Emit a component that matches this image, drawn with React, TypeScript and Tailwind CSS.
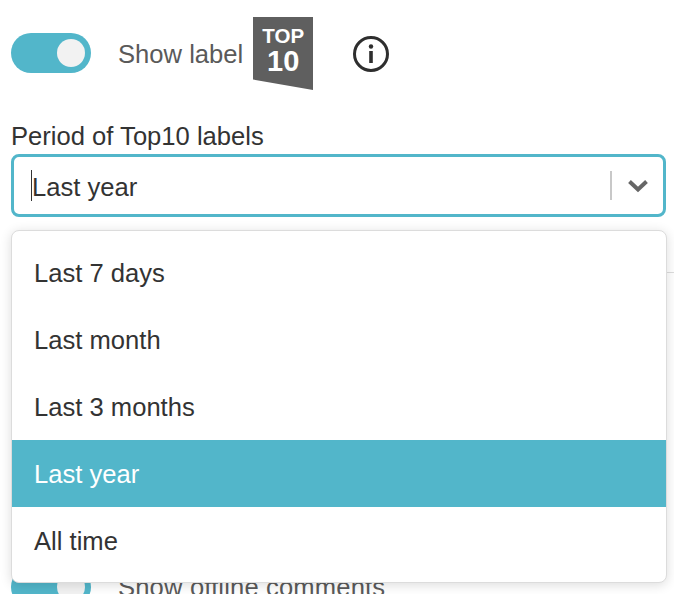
import React from 'react';

const options = ['Last 7 days', 'Last month', 'Last 3 months', 'Last year', 'All time'];

const Toggle = () => (
  <div className="flex h-10 w-20 shrink-0 items-center justify-end rounded-full bg-[#52b6ca] pr-1.5">
    <div className="h-[28px] w-[28px] rounded-full bg-[#f2f2f2]" />
  </div>
);

const Top10Badge = () => (
  <div className="relative h-[73px] w-[60px] shrink-0">
    <svg width="60" height="73" viewBox="0 0 60 73" className="absolute inset-0">
      <path d="M0 0H60V73L0 62.5Z" fill="#5f5f5f" />
    </svg>
    <div className="relative flex flex-col items-center pt-[8px] font-bold text-white">
      <span className="text-[20.5px] leading-[22px]">TOP</span>
      <span className="text-[29px] leading-[29px]">10</span>
    </div>
  </div>
);

const InfoIcon = () => (
  <svg width="38" height="38" viewBox="0 0 38 38" fill="none" className="shrink-0">
    <circle cx="19" cy="19" r="16.5" stroke="#2e2e2e" strokeWidth="3" />
    <circle cx="19" cy="11.5" r="2.2" fill="#2e2e2e" />
    <rect x="17.2" y="16" width="3.6" height="12" fill="#2e2e2e" />
  </svg>
);

export default function App() {
  return (
    <div className="relative h-[594px] w-[674px] overflow-hidden bg-white font-['Liberation_Sans',sans-serif] text-[#333333]">
      <div className="flex items-start pl-[11px] pt-[17px]">
        <div className="mt-4">
          <Toggle />
        </div>
        <span className="ml-[27px] mt-[21px] text-[25.6px] leading-[32px] text-[#5a5a5a]">Show label</span>
        <div className="ml-[10px]">
          <Top10Badge />
        </div>
        <div className="ml-[39px] mt-[18px]">
          <InfoIcon />
        </div>
      </div>

      <div className="ml-[11px] mr-[8px] mt-[30px]">
        <div className="text-[25.6px] leading-[32px]">Period of Top10 labels</div>
        <div className="mt-[2px] flex h-[63px] items-center rounded-lg border-[3px] border-[#52b6ca] bg-white pl-[17px] pr-[14px]">
          <span className="h-[31px] w-px bg-[#333333]" />
          <span className="flex-1 pt-[2px] text-[25.6px] leading-[32px]">Last year</span>
          <span className="h-[29px] w-[2px] bg-[#c8c8c8]" />
          <svg width="22" height="14" viewBox="0 0 22 14" fill="none" className="ml-[15px]">
            <path d="M2.5 2.5L11 10.5L19.5 2.5" stroke="#666666" strokeWidth="4" />
          </svg>
        </div>
      </div>

      {/* rows underneath the open menu, only their edges show */}
      <div className="absolute left-[666px] right-0 top-[272px] h-px bg-[#dddddd]" />
      <div className="absolute left-[11px] top-[372px] h-10 w-20 rounded-full bg-[#52b6ca]" />
      <div className="absolute left-[11px] top-[437px] h-10 w-20 rounded-full bg-[#52b6ca]" />
      <div className="absolute left-[11px] top-[503px] h-10 w-20 rounded-full bg-[#8a8a8a]" />
      <div className="absolute left-[11px] top-[567px] flex items-center">
        <Toggle />
        <span className="ml-[27px] text-[25.6px] leading-[32px] tracking-[0.15px] text-[#5a5a5a]">Show offline comments</span>
      </div>

      <div className="absolute left-[11px] top-[230px] w-[656px] rounded-lg border border-[#dcdcdc] bg-white py-[8px] shadow-[0_2px_12px_rgba(0,0,0,0.14)]">
        {options.map((option) => (
          <div
            key={option}
            className={`flex h-[67px] items-center pl-[22px] pt-[1px] text-[25.6px] ${option === 'Last year' ? 'bg-[#52b6ca] text-white' : ''}`}
          >
            {option}
          </div>
        ))}
      </div>
    </div>
  );
}
